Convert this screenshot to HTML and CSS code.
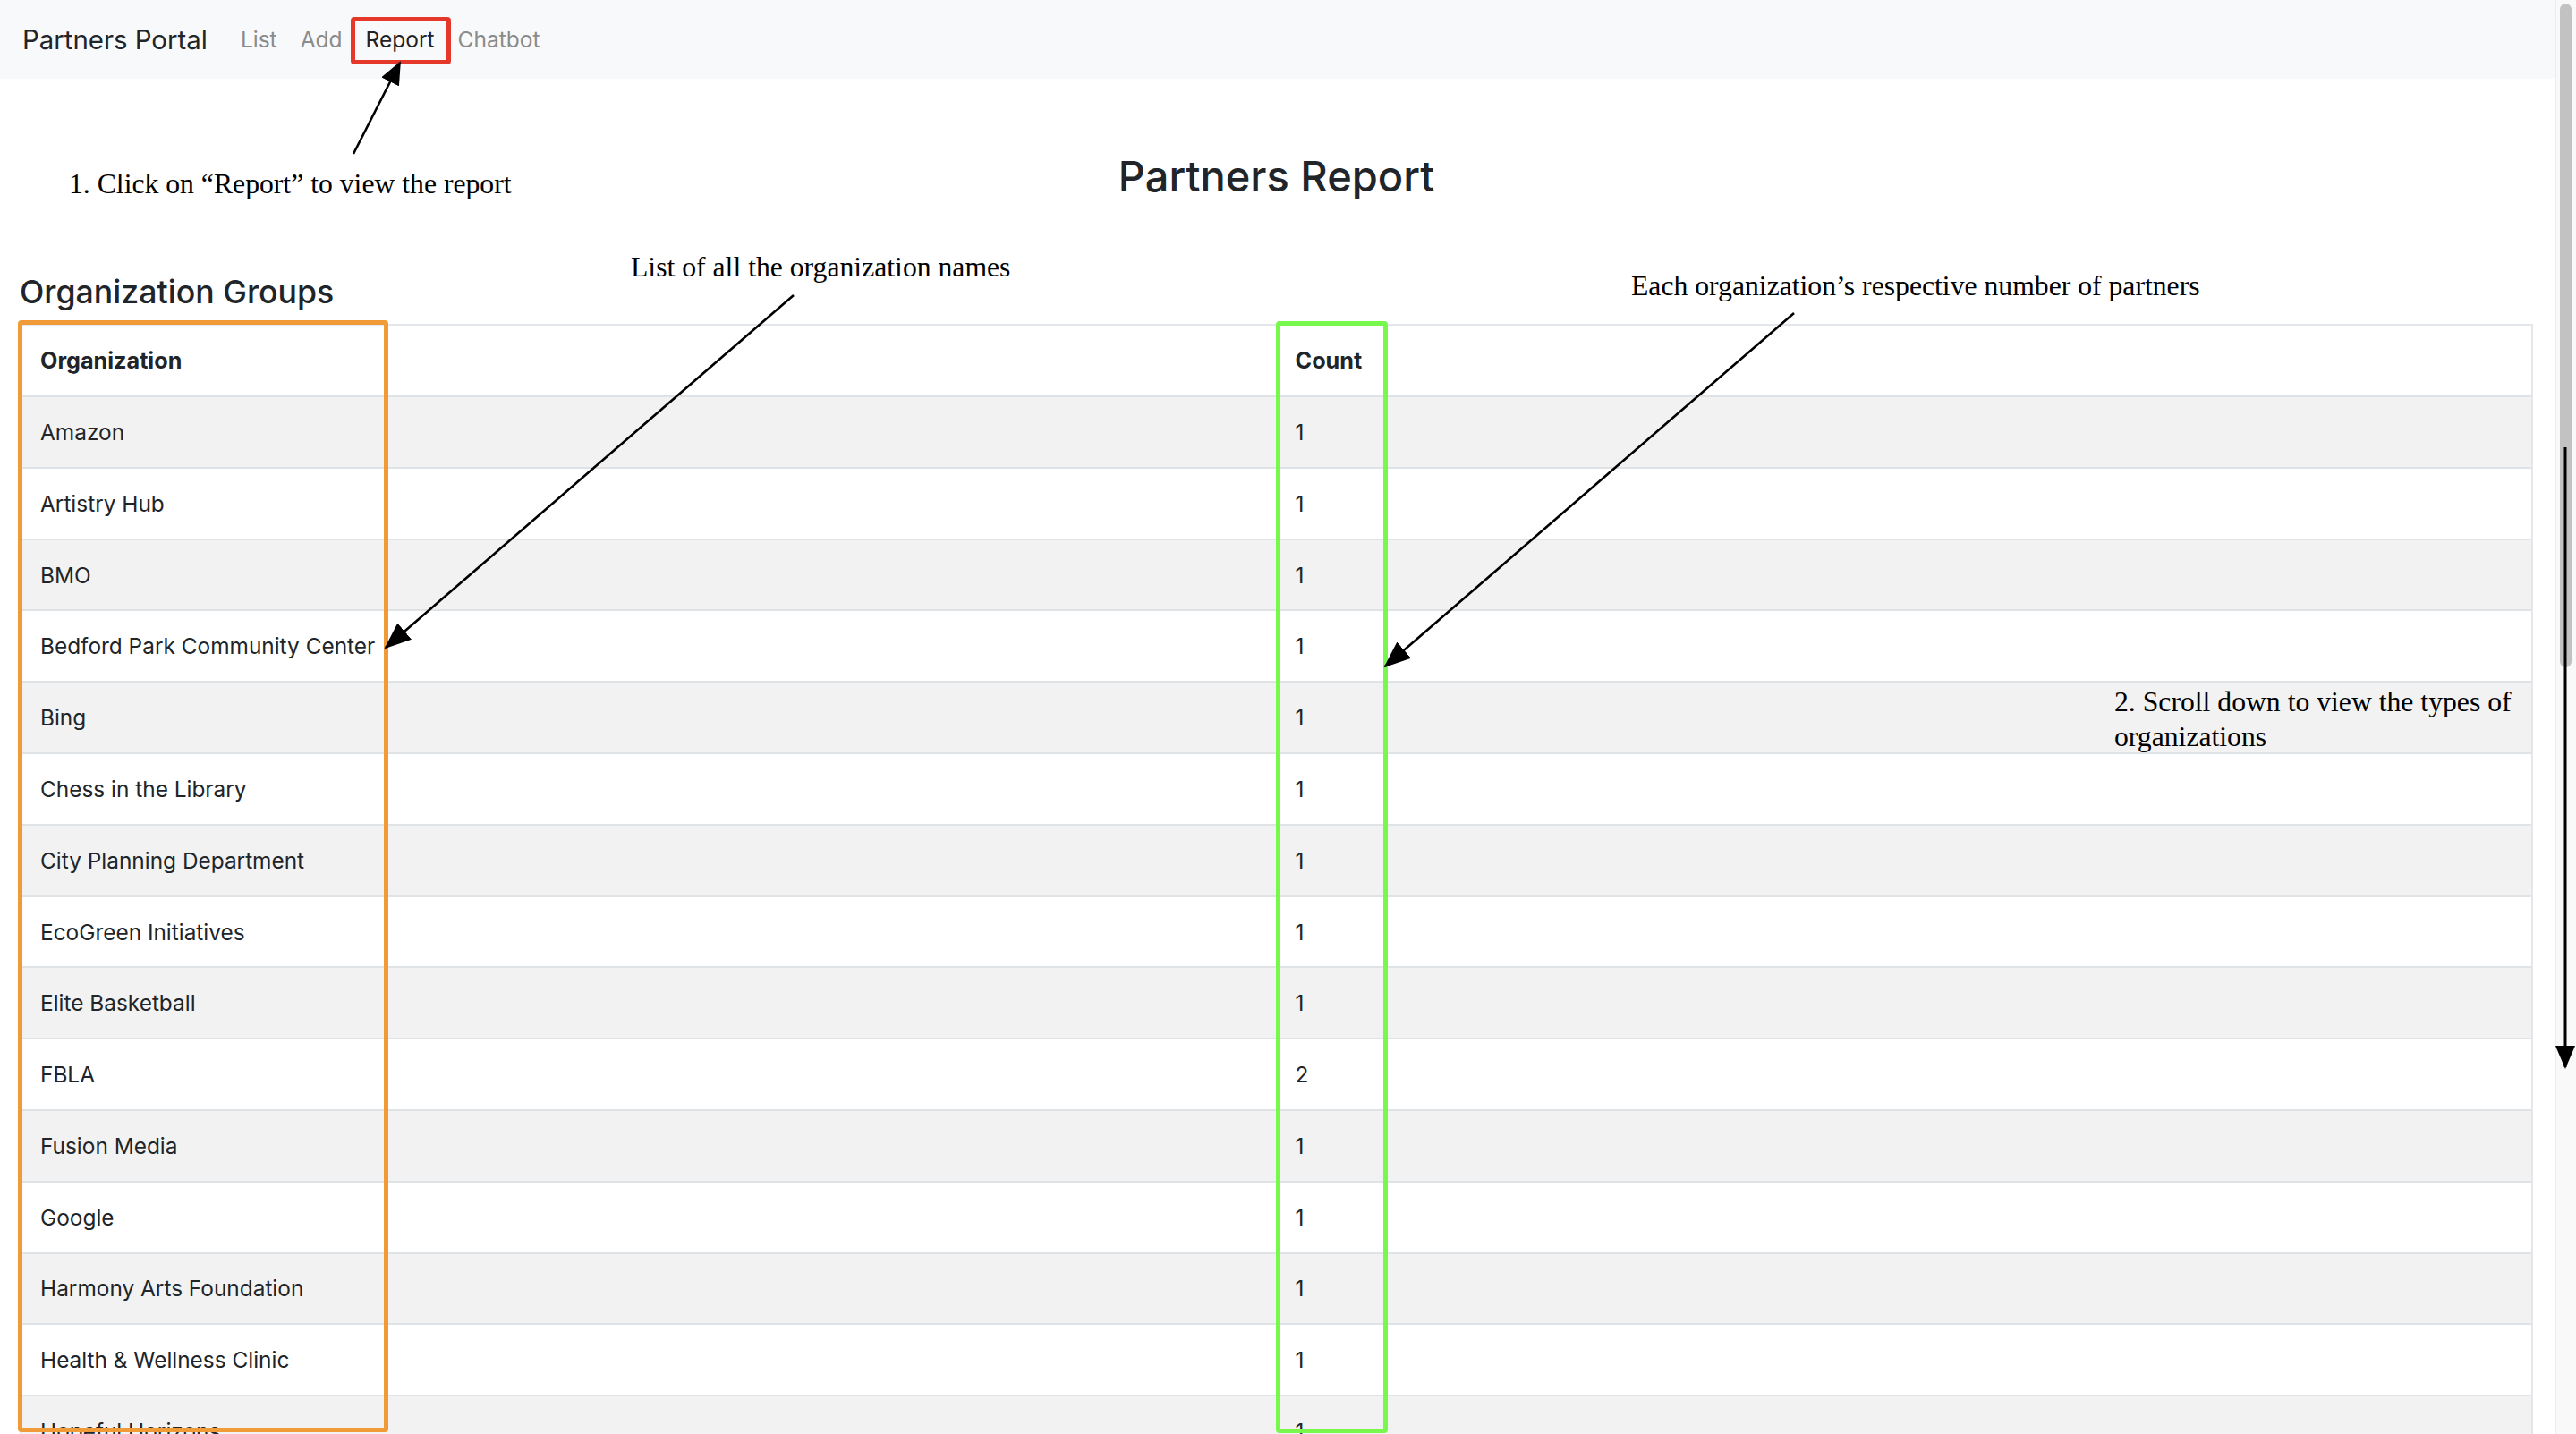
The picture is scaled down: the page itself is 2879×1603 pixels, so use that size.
FILE: index.html
```html
<!DOCTYPE html>
<html lang="en">
<head>
<meta charset="utf-8">
<title>Partners Report</title>
<link rel="stylesheet" href="styles.css">
</head>
<body>
<div class="app">
  <div class="page">
    <nav class="navbar">
      <a class="brand" href="#">Partners Portal</a>
      <ul class="nav">
        <li><a class="nav-link" href="#">List</a></li>
        <li><a class="nav-link" href="#">Add</a></li>
        <li><a class="nav-link active" href="#">Report</a></li>
        <li><a class="nav-link" href="#">Chatbot</a></li>
      </ul>
    </nav>
    <main class="content">
      <h1 class="title">Partners Report</h1>
      <h3 class="section-title">Organization Groups</h3>
      <table class="report-table">
        <thead>
          <tr><th>Organization</th><th>Count</th></tr>
        </thead>
        <tbody>
          <tr><td>Amazon</td><td>1</td></tr>
          <tr><td>Artistry Hub</td><td>1</td></tr>
          <tr><td>BMO</td><td>1</td></tr>
          <tr><td>Bedford Park Community Center</td><td>1</td></tr>
          <tr><td>Bing</td><td>1</td></tr>
          <tr><td>Chess in the Library</td><td>1</td></tr>
          <tr><td>City Planning Department</td><td>1</td></tr>
          <tr><td>EcoGreen Initiatives</td><td>1</td></tr>
          <tr><td>Elite Basketball</td><td>1</td></tr>
          <tr><td>FBLA</td><td>2</td></tr>
          <tr><td>Fusion Media</td><td>1</td></tr>
          <tr><td>Google</td><td>1</td></tr>
          <tr><td>Harmony Arts Foundation</td><td>1</td></tr>
          <tr><td>Health &amp; Wellness Clinic</td><td>1</td></tr>
          <tr><td>Hopeful Horizons</td><td>1</td></tr>
          <tr><td>IBM</td><td>1</td></tr>
        </tbody>
      </table>
    </main>
  </div>
  <div class="scrollbar"><div class="thumb"></div></div>

  <div class="annotations">
    <div class="mark mark-red"></div>
    <div class="mark mark-orange"></div>
    <div class="mark mark-green"></div>
    <p class="note note-1">1. Click on “Report” to view the report</p>
    <p class="note note-2">List of all the organization names</p>
    <p class="note note-3">Each organization’s respective number of partners</p>
    <p class="note note-4">2. Scroll down to view the types of organizations</p>
    <svg class="arrows" width="2879" height="1603" viewBox="0 0 2879 1603">
      <defs>
        <marker id="head" markerUnits="userSpaceOnUse" markerWidth="30" markerHeight="24" refX="28" refY="12" orient="auto">
          <path d="M0,0 L30,12 L0,24 Z" fill="#000"/>
        </marker>
        <marker id="head-s" markerUnits="userSpaceOnUse" markerWidth="26" markerHeight="22" refX="24" refY="11" orient="auto">
          <path d="M0,0 L26,11 L0,22 Z" fill="#000"/>
        </marker>
      </defs>
      <line x1="395" y1="172" x2="447" y2="70" stroke="#000" stroke-width="2.6" marker-end="url(#head-s)"/>
      <line x1="887" y1="330" x2="431" y2="724" stroke="#000" stroke-width="2.6" marker-end="url(#head)"/>
      <line x1="2005" y1="350" x2="1548" y2="745" stroke="#000" stroke-width="2.6" marker-end="url(#head)"/>
      <line x1="2867" y1="500" x2="2867" y2="1193" stroke="#000" stroke-width="3" marker-end="url(#head-s)"/>
    </svg>
  </div>
</div>
</body>
</html>
```

FILE: styles.css
```css
html, body {
  margin: 0;
  padding: 0;
  overflow: hidden;
  background: #fff;
}

body {
  font-family: Inter, "Liberation Sans", Arial, sans-serif;
  color: #212529;
}

.app {
  position: relative;
  display: flex;
  width: 100vw;
  height: 100vh;
  overflow: hidden;
}

.page {
  flex: 1;
  min-width: 0;
  overflow: hidden;
}

/* Navbar */
.navbar {
  display: flex;
  align-items: center;
  height: 88px;
  padding: 0 0 0 25px;
  background: #f8f9fa;
}

.brand {
  font-size: 29.4px;
  color: #212529;
  text-decoration: none;
  margin-right: 24px;
}

.nav {
  display: flex;
  list-style: none;
  margin: 0;
  padding: 0;
}

.nav-link {
  display: block;
  padding: 0 13px;
  font-size: 24.5px;
  color: #8a8b8c;
  text-decoration: none;
}

.nav-link.active {
  color: #1f2225;
}

/* Content */
.content {
  padding: 0 24px 0 22px;
}

.title {
  margin: 81px 0 0;
  text-align: center;
  font-size: 47px;
  font-weight: 500;
  line-height: 1.2;
}

.section-title {
  margin: 80px 0 14px 0;
  font-size: 35.7px;
  font-weight: 500;
  line-height: 1.2;
}

.report-table {
  width: 100%;
  table-layout: fixed;
  border-collapse: separate;
  border-spacing: 0;
  border: 2px solid #e3e6ea;
  border-bottom: none;
  font-size: 24.4px;
}

.report-table th,
.report-table td {
  height: 79.8px;
  padding: 0 21px;
  text-align: left;
  vertical-align: middle;
  border-bottom: 2px solid #e0e3e6;
  box-sizing: border-box;
}

.report-table th {
  font-size: 25.2px;
  font-weight: 700;
}

.report-table tbody tr:nth-child(odd) td {
  background: #f2f2f2;
}

/* Fake macOS scrollbar */
.scrollbar {
  width: 24px;
  box-sizing: border-box;
  background: #f9f9f9;
  border-left: 2px solid #ececec;
  padding: 4px 0 0 4px;
}

.thumb {
  width: 13px;
  height: 742px;
  border-radius: 7px;
  background: #c2c2c2;
}

/* Annotation overlay */
.annotations {
  position: absolute;
  inset: 0;
  pointer-events: none;
}

.mark {
  position: absolute;
  box-sizing: border-box;
  border-radius: 4px;
}

.mark-red {
  left: 392px;
  top: 19px;
  width: 112px;
  height: 53px;
  border: 5px solid #e5382b;
}

.mark-orange {
  left: 20px;
  top: 358px;
  width: 414px;
  height: 1243px;
  border: 5.5px solid #f19b38;
}

.mark-green {
  left: 1426px;
  top: 359px;
  width: 125px;
  height: 1243px;
  border: 5.5px solid #78f84c;
}

.note {
  position: absolute;
  margin: 0;
  font-family: "Liberation Serif", "Times New Roman", serif;
  font-size: 31.7px;
  line-height: 32px;
  color: #000;
  white-space: nowrap;
}

.note-1 { left: 77px; top: 190px; }
.note-2 { left: 705px; top: 283px; }
.note-3 { left: 1823px; top: 304px; }

.note-4 {
  left: 2363px;
  top: 765px;
  width: 470px;
  line-height: 39px;
  white-space: normal;
}

.arrows {
  position: absolute;
  left: 0;
  top: 0;
}
```
